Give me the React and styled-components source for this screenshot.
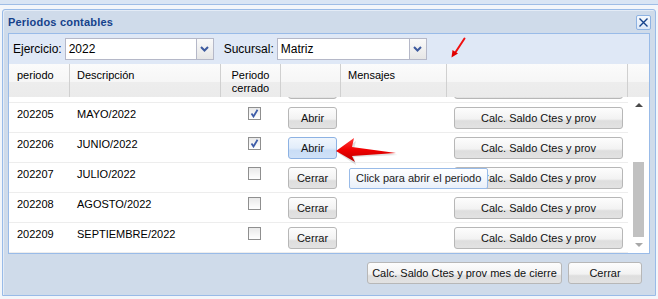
import React, { useLayoutEffect, useRef } from 'react';
import styled, { createGlobalStyle } from 'styled-components';

const GlobalStyle = createGlobalStyle`
  * { box-sizing: border-box; }
  html, body { margin: 0; padding: 0; }
  body {
    background: #f3f6fa;
    font-family: "Liberation Sans", Arial, sans-serif;
    overflow: hidden;
  }
`;

const periods = [
  { id: '202201', desc: 'ENERO/2022', closed: true },
  { id: '202202', desc: 'FEBRERO/2022', closed: true },
  { id: '202203', desc: 'MARZO/2022', closed: true },
  { id: '202204', desc: 'ABRIL/2022', closed: true },
  { id: '202205', desc: 'MAYO/2022', closed: true },
  { id: '202206', desc: 'JUNIO/2022', closed: true, hover: true },
  { id: '202207', desc: 'JULIO/2022', closed: false },
  { id: '202208', desc: 'AGOSTO/2022', closed: false },
  { id: '202209', desc: 'SEPTIEMBRE/2022', closed: false },
];

const cols = [61, 151, 60, 60, 106, 181];

const Page = styled.div`
  position: relative;
  width: 658px;
  height: 299px;
`;

const Backdrop = styled.div`
  height: 5px;
  background: #d9e5f4;
  border-bottom: 1px solid #9fbde6;
`;

const Window = styled.div`
  margin: 4px 0 0 2px;
  width: 654px;
  height: 287px;
  display: flex;
  flex-direction: column;
  background: #cfdbea;
  border: 1px solid #99bbe8;
  border-radius: 3px 3px 0 0;
  box-shadow: inset 1px 1px 0 #e4ecf6;
`;

const TitleBar = styled.div`
  height: 23px;
  display: flex;
  align-items: center;
  justify-content: space-between;
  padding: 0 4px 0 5px;
`;

const Title = styled.span`
  font-size: 11px;
  font-weight: bold;
  letter-spacing: 0.2px;
  color: #15428b;
`;

const CloseTool = styled.div`
  width: 15px;
  height: 15px;
  margin-top: 2px;
  display: flex;
  align-items: center;
  justify-content: center;
  border: 1px solid #8eb3e3;
  border-radius: 2px;
  background: linear-gradient(#f4f8fd, #dde8f7);
`;

const Panel = styled.div`
  margin: 0 5px;
  border: 1px solid #99bbe8;
  background: #fff;
  display: flex;
  flex-direction: column;
`;

const Toolbar = styled.div`
  height: 30px;
  display: flex;
  align-items: flex-start;
  padding: 4px 4px 0 4px;
  background: #dfe8f6;
`;

const Label = styled.span`
  font-size: 12px;
  line-height: 22px;
  color: #000;
  margin-right: 3px;
  margin-left: ${(p) => p.$ml || 0}px;
`;

const Combo = styled.div`
  width: ${(p) => p.$w}px;
  height: 22px;
  display: flex;
  border: 1px solid #b5b8c8;
  background: #fff;
`;

const ComboText = styled.div`
  flex: 1;
  font-size: 12px;
  line-height: 20px;
  padding-left: 3px;
  color: #000;
`;

const Trigger = styled.div`
  width: 17px;
  border-left: 1px solid #b5b8c8;
  background: linear-gradient(#fafafa, #e6e6e6);
  display: flex;
  align-items: center;
  justify-content: center;
`;

const HeaderRow = styled.div`
  height: 33px;
  display: flex;
  background: linear-gradient(#fbfbfb 0%, #f6f6f6 54%, #ededed 56%, #ebebeb 100%);
`;

const HeaderCell = styled.div`
  width: ${(p) => p.$w}px;
  flex: ${(p) => (p.$fill ? 1 : 'none')};
  border-right: ${(p) => (p.$fill ? 'none' : '1px solid #d0d0d0')};
  padding: 5px 6px 0 ${(p) => p.$pl || 7}px;
  font-size: 11px;
  line-height: 13px;
  color: #000;
  text-align: ${(p) => p.$align || 'left'};
`;

const BodyWrap = styled.div`
  height: 156px;
  display: flex;
`;

const Viewport = styled.div`
  width: 619px;
  overflow: hidden;
`;

const Row = styled.div`
  height: 30px;
  display: flex;
  border-bottom: 1px solid #ededed;
`;

const Cell = styled.div`
  width: ${(p) => p.$w}px;
  padding: 4px 0 0 ${(p) => p.$pl || 7}px;
  font-size: 11px;
  line-height: 14px;
  color: #000;
  display: flex;
  justify-content: ${(p) => (p.$center ? 'center' : 'flex-start')};
`;

const Check = styled.div`
  width: 13px;
  height: 13px;
  border: 1px solid #8f8f8f;
  background: linear-gradient(#e9e9e9, #ffffff);
  display: flex;
  align-items: center;
  justify-content: center;
`;

const Button = styled.div`
  width: ${(p) => p.$w}px;
  height: 22px;
  border: 1px solid ${(p) => (p.$hover ? '#8db2e3' : '#b7b7b7')};
  border-radius: 3px;
  background: ${(p) =>
    p.$hover
      ? 'linear-gradient(#f0f6fd 0%, #e2edfa 50%, #c9ddf6 62%, #cfe1f8 100%)'
      : 'linear-gradient(#fdfdfd 0%, #f2f2f2 55%, #dedede 64%, #e2e2e2 100%)'};
  font-size: 11px;
  line-height: 20px;
  text-align: center;
  color: #111;
  white-space: nowrap;
`;

const ScrollBar = styled.div`
  flex: 1;
  display: flex;
  flex-direction: column;
  align-items: center;
  background: #fff;
`;

const ArrowBox = styled.div`
  height: 16px;
  width: 100%;
  display: flex;
  align-items: center;
  justify-content: center;
`;

const Triangle = styled.div`
  width: 0;
  height: 0;
  border-left: 4px solid transparent;
  border-right: 4px solid transparent;
  ${(p) =>
    p.$down
      ? `border-top: 4px solid ${p.$color};`
      : `border-bottom: 4px solid ${p.$color};`}
`;

const Track = styled.div`
  flex: 1;
  width: 100%;
  display: flex;
  flex-direction: column;
  justify-content: flex-end;
  align-items: center;
`;

const Thumb = styled.div`
  width: 11px;
  height: 75px;
  background: #c1c1c1;
`;

const Footer = styled.div`
  flex: 1;
  display: flex;
  justify-content: flex-end;
  gap: 6px;
  padding: 8px 13px 0 0;
`;

const Tooltip = styled.div`
  position: absolute;
  left: 349px;
  top: 168px;
  height: 21px;
  padding: 0 6px;
  border: 1px solid #99bbe8;
  border-radius: 2px;
  background: linear-gradient(#ffffff, #e9f0fa);
  font-size: 11px;
  line-height: 19px;
  color: #222;
  white-space: nowrap;
`;

const Overlay = styled.svg`
  position: absolute;
  left: ${(p) => p.$x}px;
  top: ${(p) => p.$y}px;
`;

function CheckMark() {
  return (
    <svg width="9" height="9" viewBox="0 0 9 9">
      <path d="M1.5 4.5 L3.5 7.5 L7.5 0.8" fill="none" stroke="#3d5ca8" strokeWidth="1.8" />
    </svg>
  );
}

function Chevron() {
  return (
    <svg width="9" height="6" viewBox="0 0 9 6">
      <path d="M1 1 L4.5 4.5 L8 1" fill="none" stroke="#3d5a9e" strokeWidth="2" />
    </svg>
  );
}

function Grid() {
  const ref = useRef(null);
  useLayoutEffect(() => {
    if (ref.current) ref.current.scrollTop = 114;
  }, []);

  return (
    <>
      <HeaderRow>
        <HeaderCell $w={cols[0]} $pl={8}>periodo</HeaderCell>
        <HeaderCell $w={cols[1]}>Descripción</HeaderCell>
        <HeaderCell $w={cols[2]} $align="center" $pl={6}>
          Periodo
          <br />
          cerrado
        </HeaderCell>
        <HeaderCell $w={cols[3]} />
        <HeaderCell $w={cols[4]}>Mensajes</HeaderCell>
        <HeaderCell $w={cols[5]} />
        <HeaderCell $fill />
      </HeaderRow>
      <BodyWrap>
        <Viewport ref={ref}>
          {periods.map((p) => (
            <Row key={p.id}>
              <Cell $w={cols[0]} $pl={8}>{p.id}</Cell>
              <Cell $w={cols[1]}>{p.desc}</Cell>
              <Cell $w={cols[2]} $pl={0} $center>
                <Check>{p.closed && <CheckMark />}</Check>
              </Cell>
              <Cell $w={cols[3]}>
                <Button $w={49} $hover={p.hover}>{p.closed ? 'Abrir' : 'Cerrar'}</Button>
              </Cell>
              <Cell $w={cols[4]} />
              <Cell $w={cols[5]}>
                <Button $w={169}>Calc. Saldo Ctes y prov</Button>
              </Cell>
            </Row>
          ))}
        </Viewport>
        <ScrollBar>
          <ArrowBox>
            <Triangle $color="#4a4a4a" />
          </ArrowBox>
          <Track>
            <Thumb />
          </Track>
          <ArrowBox>
            <Triangle $down $color="#a8a8a8" />
          </ArrowBox>
        </ScrollBar>
      </BodyWrap>
    </>
  );
}

export default function App() {
  return (
    <Page>
      <GlobalStyle />
      <Backdrop />
      <Window>
        <TitleBar>
          <Title>Periodos contables</Title>
          <CloseTool>
            <svg width="11" height="11" viewBox="0 0 11 11">
              <path d="M1.5 1.5 L9.5 9.5 M9.5 1.5 L1.5 9.5" stroke="#15428b" strokeWidth="1.4" />
            </svg>
          </CloseTool>
        </TitleBar>
        <Panel>
          <Toolbar>
            <Label>Ejercicio:</Label>
            <Combo $w={149}>
              <ComboText>2022</ComboText>
              <Trigger>
                <Chevron />
              </Trigger>
            </Combo>
            <Label $ml={10}>Sucursal:</Label>
            <Combo $w={150}>
              <ComboText>Matriz</ComboText>
              <Trigger>
                <Chevron />
              </Trigger>
            </Combo>
          </Toolbar>
          <Grid />
        </Panel>
        <Footer>
          <Button $w={195}>Calc. Saldo Ctes y prov mes de cierre</Button>
          <Button $w={74}>Cerrar</Button>
        </Footer>
      </Window>

      <Overlay $x={449} $y={37} width="18" height="22" viewBox="0 0 18 22">
        <path d="M15.5 1.5 L6 16" stroke="#f01010" strokeWidth="2" strokeLinecap="round" />
        <polygon points="2.5,20.5 3.5,13 9,16.5" fill="#e00000" />
      </Overlay>

      <Tooltip>Click para abrir el periodo</Tooltip>

      <Overlay $x={333} $y={135} width="66" height="30" viewBox="0 0 66 30">
        <defs>
          <linearGradient id="arrowFill" x1="0" y1="0" x2="0" y2="1">
            <stop offset="0" stopColor="#ff3a3a" />
            <stop offset="0.5" stopColor="#f00000" />
            <stop offset="1" stopColor="#b80000" />
          </linearGradient>
        </defs>
        <polygon
          points="4,17 22,5 20,13 64,19 20,21 22,29"
          fill="#000"
          opacity="0.12"
          transform="translate(1,1)"
        />
        <polygon points="3,16 21,3 19,12 63,18 19,21 22,27" fill="url(#arrowFill)" />
      </Overlay>
    </Page>
  );
}
